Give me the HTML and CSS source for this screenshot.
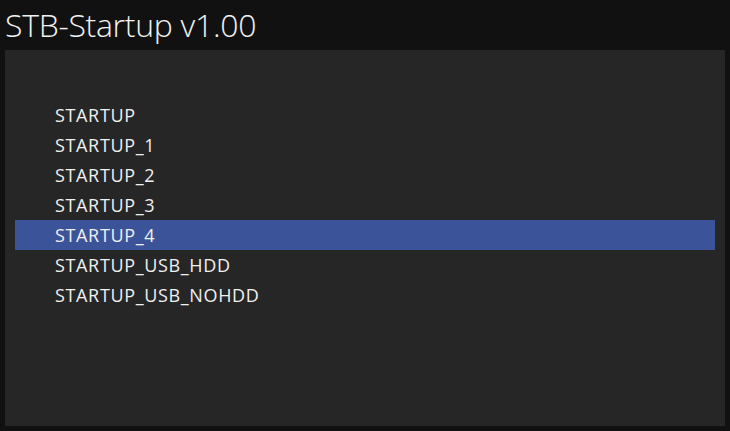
FILE: index.html
```html
<!DOCTYPE html>
<html>
<head>
<meta charset="utf-8">
<link rel="stylesheet" href="styles.css">
</head>
<body>
<div class="app">
  <div class="title">STB-Startup v1.00</div>
  <div class="panel">
    <ul class="list">
      <li class="item">STARTUP</li>
      <li class="item">STARTUP_1</li>
      <li class="item">STARTUP_2</li>
      <li class="item">STARTUP_3</li>
      <li class="item selected">STARTUP_4</li>
      <li class="item">STARTUP_USB_HDD</li>
      <li class="item">STARTUP_USB_NOHDD</li>
    </ul>
  </div>
</div>
</body>
</html>
```
FILE: styles.css
```css
html, body {
  margin: 0;
  padding: 0;
  background: #111111;
  width: 730px;
  height: 431px;
  overflow: hidden;
}
.app {
  display: flex;
  flex-direction: column;
  height: 431px;
  font-family: "Open Sans", "Noto Sans", sans-serif;
  color: #f2f2f2;
}
.title {
  height: 50px;
  box-sizing: border-box;
  padding-left: 5px;
  font-size: 32px;
  font-weight: 300;
  line-height: 50px;
  letter-spacing: -0.3px;
}
.panel {
  margin: 0 5px 5px 5px;
  flex: 1;
  background: #262626;
  padding: 50px 10px 0 10px;
}
.list {
  list-style: none;
  margin: 0;
  padding: 0;
}
.item {
  height: 30px;
  line-height: 31px;
  padding-left: 40px;
  font-size: 18px;
  letter-spacing: 0.65px;
  color: #f0f0f0;
}
.selected {
  background: #3b5499;
}
```
